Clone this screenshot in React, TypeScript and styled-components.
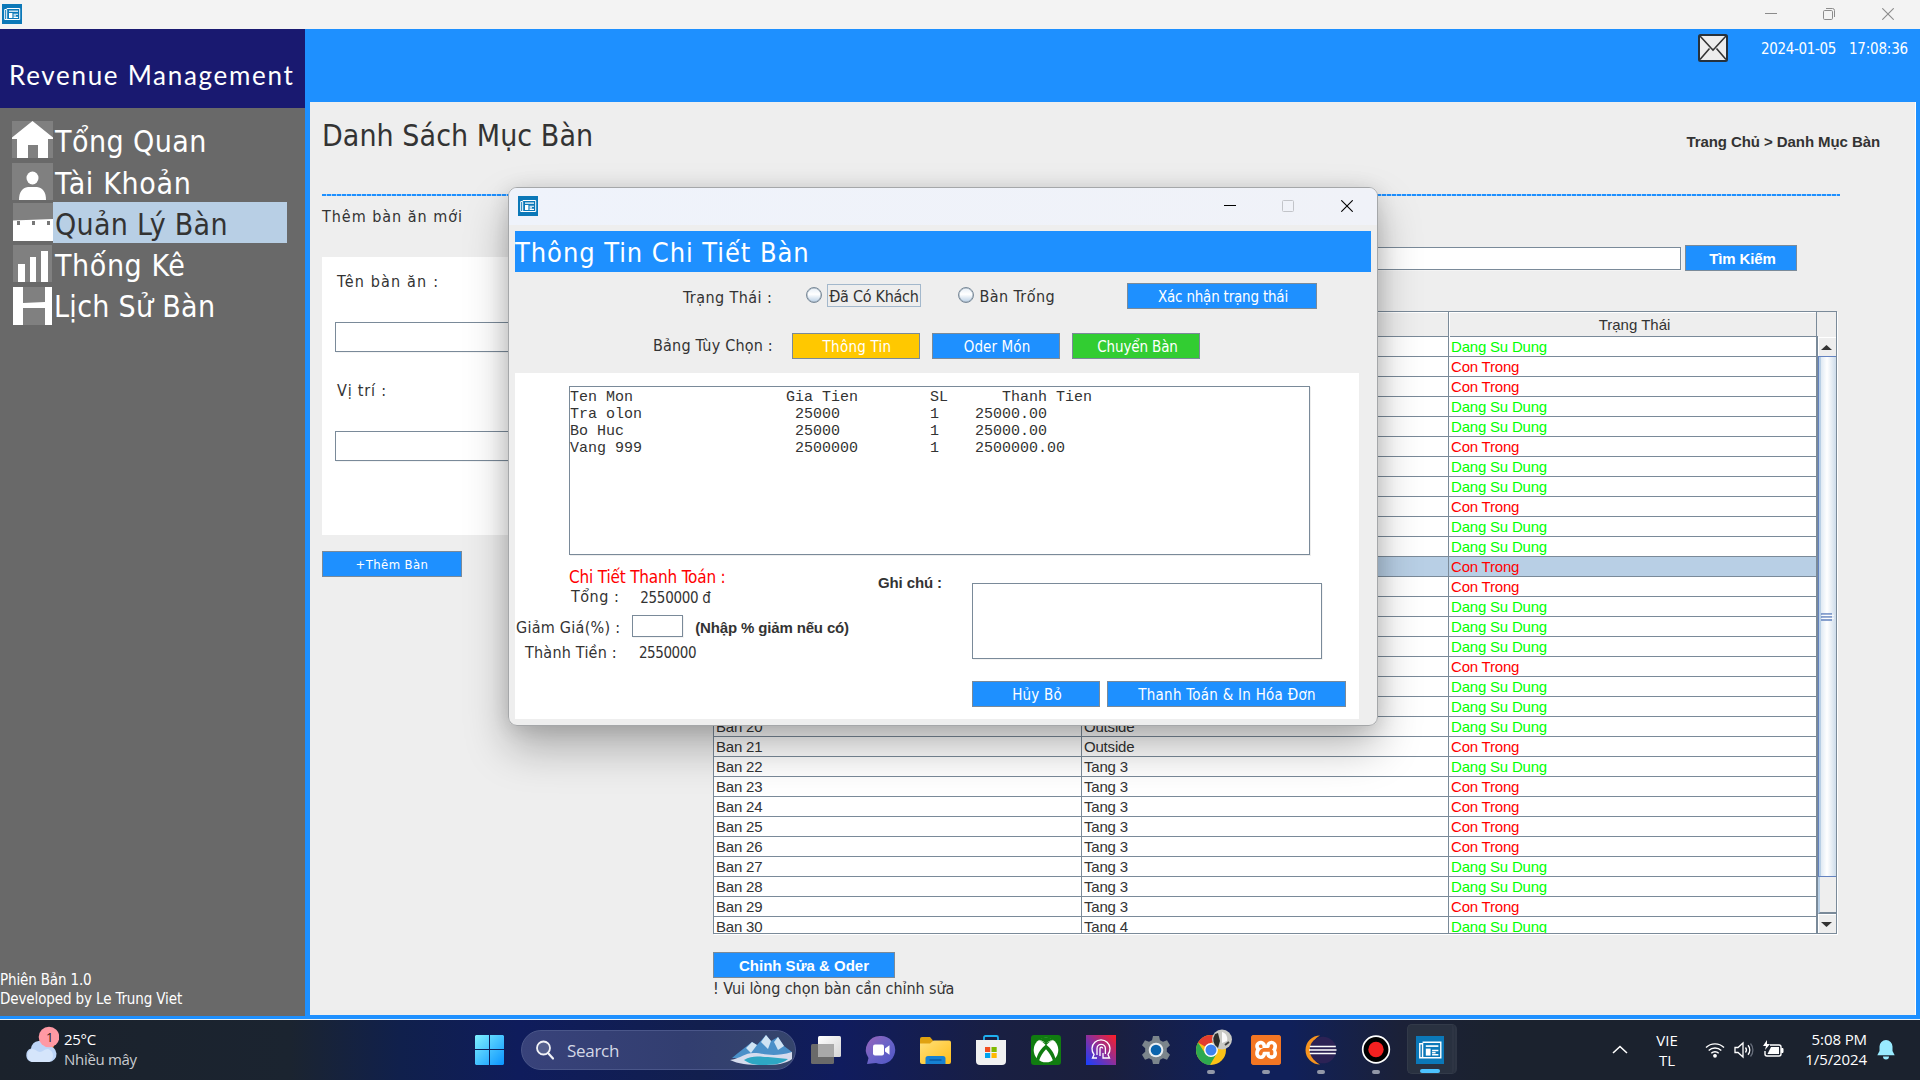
import React from "react";
import styled, { createGlobalStyle } from "styled-components";
import { SiXampp } from "react-icons/si";

const TAHOMA = `Tahoma, "DejaVu Sans Condensed", "DejaVu Sans", sans-serif`;
const ARIAL = `"Liberation Sans", Arial, sans-serif`;
const SEGOE = `"Segoe UI", "Open Sans", "Noto Sans", sans-serif`;
const TREBUCHET = `"Trebuchet MS", Lato, sans-serif`;
const MONO = `"Liberation Mono", "Courier New", monospace`;

const BLUE = "#1e90ff";
const PANEL = "#eeeeee";
const LINE = "#7a8a99";
const INK = "#333333";
const SELECT = "#b8cfe5";
const white = "#ffffff";

const GlobalStyle = createGlobalStyle`
  * { box-sizing: border-box; }
  body { margin: 0; background: #f3f3f3; overflow: hidden; }
`;

const Text = styled.span<{ $size: number; $ls?: number; $lh?: number; $font?: string; $bold?: boolean; $color?: string; $m?: string }>`
  display: block;
  width: max-content;
  flex: none;
  white-space: pre;
  font-family: ${(p) => p.$font ?? TAHOMA};
  font-stretch: ${(p) => (p.$font ? "normal" : "condensed")};
  font-size: ${(p) => p.$size}px;
  font-weight: ${(p) => (p.$bold ? 700 : 400)};
  letter-spacing: ${(p) => p.$ls ?? 0}px;
  line-height: ${(p) => p.$lh ?? 20}px;
  color: ${(p) => p.$color ?? INK};
  margin: ${(p) => p.$m ?? 0};
`;

const Screen = styled.div`
  width: 1920px;
  height: 1080px;
  position: relative;
  display: flex;
  flex-direction: column;
  overflow: hidden;
`;

/* ---------- window chrome ---------- */
const TitleBar = styled.header`
  height: 29px;
  flex: none;
  display: flex;
  align-items: center;
  justify-content: space-between;
  padding: 0 26px 1px 2px;
  background: #f3f3f3;
`;
const Controls = styled.div`
  display: flex;
  align-items: center;
  gap: 46px;
  svg:last-child {
    margin-left: 1px;
  }
`;

const AppIcon = ({ size = 20 }: { size?: number }) => (
  <svg width={size} height={size} viewBox="0 0 20 20">
    <rect width="20" height="20" fill="#0b78b8" />
    <path d="M4.700 4.500h13v11h-15v-10h2v10" fill="none" stroke="#fff" strokeWidth="1" />
    <path d="M7 7.200h9" stroke="#fff" strokeWidth="1.200" />
    <rect x="7" y="9" width="3.400" height="5" fill="#fff" />
    <path d="M11.500 10.300H16M11.500 13.400H16" stroke="#fff" strokeWidth="1.100" />
    <path d="M11.500 11.900h2.500" stroke="#fff" strokeWidth="1.100" />
  </svg>
);
const MinimizeIcon = ({ color }: { color: string }) => (
  <svg width="12" height="12" viewBox="0 0 12 12"><path d="M0 5.500h12" stroke={color} /></svg>
);
const RestoreIcon = () => (
  <svg width="12" height="12" viewBox="0 0 12 12" fill="none" stroke="#8b8b8b">
    <rect x=".5" y="2.500" width="9" height="9" rx="1.200" />
    <path d="M3 .5h6.500a2 2 0 0 1 2 2V9" />
  </svg>
);
const MaximizeIcon = () => (
  <svg width="12" height="12" viewBox="0 0 12 12" fill="none" stroke="#c2c4c9">
    <rect x=".5" y=".5" width="11" height="11" rx="1" />
  </svg>
);
const CloseIcon = ({ color }: { color: string }) => (
  <svg width="12" height="12" viewBox="0 0 12 12"><path d="M.3.3l11.400 11.400M11.700.3L.3 11.700" stroke={color} strokeWidth="1.100" /></svg>
);

/* ---------- main frame ---------- */
const Frame = styled.div`
  height: 990px;
  flex: none;
  display: flex;
  background: ${BLUE};
`;
const Sidebar = styled.nav`
  width: 305px;
  height: 987px;
  display: flex;
  flex-direction: column;
  background: #696969;
`;
const Brand = styled.div`
  height: 79px;
  flex: none;
  padding: 29px 0 0 9px;
  background: #191970;
`;
const Menu = styled.ul`
  list-style: none;
  margin: 0;
  padding: 12px 0 0 12px;
  flex: 1;
`;
const MenuItem = styled.li<{ $indent: number }>`
  display: flex;
  height: 41px;
  padding-left: ${(p) => p.$indent}px;
  align-items: flex-start;
`;
const MenuIcon = styled.svg<{ $dy: number }>`
  display: block;
  flex: none;
  margin-top: ${(p) => p.$dy}px;
  background: #808080;
`;
const MenuLabel = styled.div<{ $active?: boolean; $gap?: number }>`
  height: 41px;
  width: 234px;
  margin-left: ${(p) => p.$gap ?? 0}px;
  padding-left: 2px;
  background: ${(p) => (p.$active ? SELECT : "transparent")};
`;
const Footer = styled.div`
  height: 49px;
  padding-top: 4px;
`;

const Main = styled.div`
  flex: 1;
  margin-left: 5px;
  display: flex;
  flex-direction: column;
`;
const TopStrip = styled.div`
  height: 73px;
  flex: none;
  display: flex;
  justify-content: flex-end;
  align-items: flex-start;
  padding: 6px 12px 0 0;
`;
const MailIcon = styled.svg`
  display: block;
  margin-top: -1px;
`;
const Content = styled.main`
  width: 1606px;
  height: 913px;
  padding-left: 12px;
  border-right: 1px solid #fff;
  background: ${PANEL};
`;
const Heading = styled.div`
  height: 92px;
  display: flex;
  justify-content: space-between;
  padding-right: 35px;
`;
const DashLine = styled.div`
  width: 1518px;
  height: 2px;
  background: repeating-linear-gradient(90deg, ${BLUE} 0 4px, #a5cff8 4px 5px);
`;
const Columns = styled.div`
  display: flex;
`;
const FormColumn = styled.section`
  width: 391px;
  padding-top: 11px;
`;
const FormCard = styled.div`
  width: 340px;
  height: 278px;
  margin: 30px 0 16px;
  padding: 15px 0 0 13px;
  background: #fff;
`;
const Field = styled.div<{ $w: number; $h: number; $m?: string }>`
  width: ${(p) => p.$w}px;
  height: ${(p) => p.$h}px;
  flex: none;
  margin: ${(p) => p.$m ?? 0};
  background: #fff;
  border: 1px solid ${LINE};
  box-shadow: 1px 1px 0 #f4f4f4;
`;
const Button = styled.button<{ $w: number; $bg?: string; $m?: string; $pl?: number }>`
  width: ${(p) => p.$w}px;
  height: 26px;
  flex: none;
  margin: ${(p) => p.$m ?? 0};
  padding: 1px 0 0 ${(p) => p.$pl ?? 0}px;
  display: flex;
  align-items: center;
  justify-content: center;
  border: 1px solid ${LINE};
  background: ${(p) => p.$bg ?? BLUE};
`;
const ListColumn = styled.section`
  width: 1124px;
  padding-top: 49px;
`;
const SearchRow = styled.div`
  display: flex;
  align-items: center;
  justify-content: flex-end;
  gap: 4px;
  padding-right: 40px;
  margin-bottom: 40px;
`;

/* ---------- table ---------- */
const TableBox = styled.div`
  width: 1124px;
  height: 623px;
  display: grid;
  grid-template-columns: 1104px 19px;
  grid-template-rows: 25px 596px;
  border: 1px solid ${LINE};
  border-right: 0;
  box-shadow: 1px 1px 0 #fff;
`;
const HeadRow = styled.div`
  display: grid;
  grid-template-columns: 368px 367px 368px;
  border-bottom: 1px solid ${LINE};
`;
const HeadCell = styled.div`
  display: flex;
  justify-content: center;
  padding-left: 4px;
  border-right: 1px solid ${LINE};
  box-shadow: inset 1px 1px 0 #fff;
`;
const Corner = styled.div`
  border-right: 1px solid ${LINE};
`;
const Rows = styled.div`
  overflow: hidden;
  background: #fff;
  border-right: 2px solid ${LINE};
`;
const Row = styled.div<{ $selected: boolean }>`
  height: 20px;
  display: grid;
  grid-template-columns: 368px 367px 367px;
  background: ${(p) => (p.$selected ? SELECT : "#fff")};
  border-bottom: 1px solid ${LINE};
`;
const Cell = styled.div<{ $color?: string }>`
  padding-left: 2px;
  font: 15px/19px ${ARIAL};
  letter-spacing: -0.2px;
  color: ${(p) => p.$color ?? INK};
  white-space: nowrap;
  border-right: 1px solid ${LINE};
  &:last-child {
    border-right: 0;
  }
`;
const ScrollBar = styled.div`
  display: flex;
  flex-direction: column;
  border-right: 1px solid ${LINE};
  background: ${PANEL};
`;
const ScrollButton = styled.div<{ $h: number }>`
  height: ${(p) => p.$h}px;
  display: flex;
  align-items: center;
  justify-content: center;
  border-top: 1px solid #fff;
  border-left: 1px solid #fff;
  padding-right: 2px;
`;
const Thumb = styled.div`
  height: 521px;
  display: flex;
  align-items: center;
  justify-content: center;
  border: 1px solid #6382bf;
  border-right: 0;
  background: linear-gradient(90deg, #b8cfe5 0 2px, #dfe9f3 2px, #fff 8px, #c8d8e8 18px);
`;
const Track = styled.div`
  height: 37px;
  border-left: 2px solid ${SELECT};
  border-bottom: 2px solid ${LINE};
`;

type Status = "D" | "C";
const STATUSES = "DCCDDCDDCDDCCDDDCDDDCDCCCCDDCD".split("") as Status[];
const placeOf = (n: number) => (n < 22 ? "Outside" : n < 30 ? "Tang 3" : "Tang 4");

function TableList() {
  return (
    <TableBox>
      <HeadRow>
        <HeadCell />
        <HeadCell />
        <HeadCell>
          <Text $size={15} $lh={26} $font={ARIAL}>Trạng Thái</Text>
        </HeadCell>
      </HeadRow>
      <Corner />
      <Rows>
        {STATUSES.map((s, i) => (
          <Row key={i} $selected={i === 11}>
            <Cell>{i >= 19 ? `Ban ${i + 1}` : ""}</Cell>
            <Cell>{i >= 19 ? placeOf(i + 1) : ""}</Cell>
            <Cell $color={s === "D" ? "#00ff00" : "#ff0000"}>{s === "D" ? "Dang Su Dung" : "Con Trong"}</Cell>
          </Row>
        ))}
      </Rows>
      <ScrollBar>
        <ScrollButton $h={19}>
          <svg width="11" height="5" viewBox="0 0 11 5"><path d="M5.500 0L11 5H0z" fill={INK} /></svg>
        </ScrollButton>
        <Thumb>
          <svg width="13" height="8" viewBox="0 0 13 8">
            <path d="M0 1h11M0 4h11M0 7h11" stroke="#6382bf" strokeWidth="1.600" />
            <path d="M1 2.300h12M1 5.300h12" stroke="#fff" strokeWidth=".9" />
          </svg>
        </Thumb>
        <Track />
        <ScrollButton $h={19}>
          <svg width="11" height="5" viewBox="0 0 11 5"><path d="M0 0h11L5.500 5z" fill={INK} /></svg>
        </ScrollButton>
      </ScrollBar>
    </TableBox>
  );
}

/* ---------- dialog ---------- */
const DialogShadow = styled.div`
  position: absolute;
  left: 508px;
  top: 187px;
  width: 870px;
  height: 539px;
  border-radius: 9px;
  box-shadow: 0 22px 44px rgba(0, 0, 0, 0.28), 0 2px 20px rgba(0, 0, 0, 0.12);
`;
const Dialog = styled.div`
  position: absolute;
  left: 508px;
  top: 187px;
  width: 870px;
  height: 539px;
  border: 1px solid #a5a7a9;
  border-radius: 9px;
  overflow: hidden;
  background: ${PANEL};
`;
const DialogTitle = styled.div`
  height: 37px;
  display: flex;
  align-items: center;
  justify-content: space-between;
  padding: 0 24px 1px 9px;
  background: linear-gradient(90deg, #eff3fb, #f0f2f8);
`;
const DialogBody = styled.div`
  padding: 6px 5px 0 6px;
`;
const Banner = styled.h2`
  margin: 0;
  height: 41px;
  width: 856px;
  background: ${BLUE};
`;
const OptionRow = styled.div<{ $h: number; $pl: number; $pr: number }>`
  display: flex;
  align-items: flex-start;
  height: ${(p) => p.$h}px;
  padding: 11px ${(p) => p.$pr}px 0 ${(p) => p.$pl}px;
`;
const Radio = styled.span<{ $m: string }>`
  width: 16px;
  height: 16px;
  flex: none;
  margin: ${(p) => p.$m};
  border: 1px solid ${LINE};
  border-radius: 50%;
  background: linear-gradient(#e6eef6, #fff 45%, #c6d8ea 90%);
  box-shadow: inset 0 0 0 0.5px #9aa8b5;
`;
const RadioLabel = styled.span<{ $focus?: boolean; $m: string }>`
  height: 23px;
  margin: ${(p) => p.$m};
  padding: 0 1px;
  border: 1px solid ${(p) => (p.$focus ? "#a3b8cc" : "transparent")};
`;
const Sheet = styled.div`
  width: 844px;
  height: 346px;
  padding-top: 13px;
  background: #fff;
`;
const Receipt = styled.pre`
  width: 741px;
  height: 169px;
  margin: 0 0 0 54px;
  padding: 1.6px 0 0 0;
  border: 1px solid ${LINE};
  box-shadow: 1px 1px 0 #eee;
  font: 15px/17.2px ${MONO};
  color: ${INK};
`;
const PayArea = styled.div`
  display: grid;
  grid-template-columns: 457px 387px;
`;
const PayDetail = styled.div`
  padding-top: 12px;
`;
const PayLine = styled.div<{ $h: number; $pl: number }>`
  display: flex;
  align-items: flex-start;
  height: ${(p) => p.$h}px;
  padding-left: ${(p) => p.$pl}px;
`;
const NoteRow = styled.div`
  width: 444px;
  display: flex;
  justify-content: space-between;
  margin: 28px 0 22px -94px;
`;
const Actions = styled.div`
  display: flex;
  gap: 7px;
`;

const pad = (cells: [number, string][]) => cells.reduce((line, [at, s]) => line.padEnd(at) + s, "");
const RECEIPT = [
  pad([[0, "Ten Mon"], [24, "Gia Tien"], [40, "SL"], [48, "Thanh Tien"]]),
  pad([[0, "Tra olon"], [25, "25000"], [40, "1"], [45, "25000.00"]]),
  pad([[0, "Bo Huc"], [25, "25000"], [40, "1"], [45, "25000.00"]]),
  pad([[0, "Vang 999"], [25, "2500000"], [40, "1"], [45, "2500000.00"]]),
].join("\n");

function DetailDialog() {
  return (
    <Dialog>
      <DialogTitle>
        <AppIcon />
        <Controls>
          <MinimizeIcon color="#000" />
          <MaximizeIcon />
          <CloseIcon color="#000" />
        </Controls>
      </DialogTitle>
      <DialogBody>
        <Banner><Text $size={27} $lh={43} $ls={0.93} $color={white}>Thông Tin Chi Tiết Bàn</Text></Banner>
        <OptionRow $h={50} $pl={168} $pr={55}>
          <Text $size={16} $ls={0.42} $m="5px 0 0">Trạng Thái :</Text>
          <Radio $m="4px 0 0 34px" />
          <RadioLabel $focus $m="1px 0 0 5px"><Text $size={16} $lh={23} $ls={-0.28}>Đã Có Khách</Text></RadioLabel>
          <Radio $m="4px 0 0 37px" />
          <RadioLabel $m="1px 0 0 4px"><Text $size={16} $lh={23} $ls={0.4}>Bàn Trống</Text></RadioLabel>
          <Button $w={190} $m="0 0 0 auto" $pl={2}><Text $size={15} $ls={-0.2} $color={white}>Xác nhận trạng thái</Text></Button>
        </OptionRow>
        <OptionRow $h={51} $pl={138} $pr={172}>
          <Text $size={16} $ls={0.2} $m="3px auto 0 0">Bảng Tùy Chọn :</Text>
          <Button $w={128} $bg="#ffc800" $pl={2}><Text $size={15} $ls={0.25} $color={white}>Thông Tin</Text></Button>
          <Button $w={128} $m="0 12px" $pl={2}><Text $size={15} $ls={0.1} $color={white}>Oder Món</Text></Button>
          <Button $w={128} $bg="#32cd32" $pl={3}><Text $size={15} $ls={-0.11} $color={white}>Chuyển Bàn</Text></Button>
        </OptionRow>
        <Sheet>
          <Receipt>{RECEIPT}</Receipt>
          <PayArea>
            <PayDetail>
              <PayLine $h={19} $pl={54}><Text $size={17} $ls={-0.18} $color="#ff0000">Chi Tiết Thanh Toán :</Text></PayLine>
              <PayLine $h={29} $pl={56}>
                <Text $size={16} $ls={0.5} $m="1px 0 0">Tổng :</Text>
                <Text $size={15} $ls={-0.3} $m="2px 0 0 21px">2550000 đ</Text>
              </PayLine>
              <PayLine $h={26} $pl={1}>
                <Text $size={16} $ls={0.26} $m="3px 0 0">Giảm Giá(%) :</Text>
                <Field $w={51} $h={22} $m="0 0 0 12px" />
                <Text $size={15} $bold $font={ARIAL} $ls={-0.15} $m="3px 0 0 12px">(Nhập % giảm nếu có)</Text>
              </PayLine>
              <PayLine $h={26} $pl={10}>
                <Text $size={16} $ls={0.22} $m="2px 0 0">Thành Tiền :</Text>
                <Text $size={15} $ls={-0.42} $m="2px 0 0 22px">2550000</Text>
              </PayLine>
            </PayDetail>
            <div>
              <NoteRow>
                <Text $size={15} $bold $font={ARIAL} $ls={-0.12} $m="-10px 0 0 0">Ghi chú :</Text>
                <Field $w={350} $h={76} />
              </NoteRow>
              <Actions>
                <Button $w={128} $pl={2}><Text $size={15} $ls={0.2} $color={white}>Hủy Bỏ</Text></Button>
                <Button $w={239} $pl={1}><Text $size={15} $ls={0.27} $color={white}>Thanh Toán & In Hóa Đơn</Text></Button>
              </Actions>
            </div>
          </PayArea>
        </Sheet>
      </DialogBody>
    </Dialog>
  );
}

/* ---------- taskbar ---------- */
const TaskBar = styled.footer`
  height: 61px;
  flex: none;
  display: grid;
  grid-template-columns: 475px 1fr auto;
  border-top: 1px solid #e8f1f5;
  background: linear-gradient(90deg, #1b222c 0, #1b2430 290px, #10204c 400px, #0f1c5c 520px, #121f4e 700px, #101c5e 840px, #191f42 1000px, #1b1f3c 1100px, #10205a 1230px, #10205a 1290px, #1b2138 1400px, #1b222e 1500px);
`;
const Weather = styled.div`
  display: flex;
  padding: 5px 0 0 25px;
`;
const Lines = styled.div<{ $align?: string; $m?: string; $w?: number }>`
  display: flex;
  flex-direction: column;
  align-items: ${(p) => p.$align ?? "flex-start"};
  margin: ${(p) => p.$m ?? 0};
  width: ${(p) => (p.$w ? `${p.$w}px` : "auto")};
`;
const Apps = styled.div`
  display: flex;
  align-items: flex-start;
`;
const StartIcon = styled.svg`
  display: block;
  flex: none;
  margin-top: 15px;
`;
const SearchPill = styled.div`
  width: 275px;
  height: 40px;
  flex: none;
  margin: 10px 2px 0 17px;
  padding: 0 3px 0 14px;
  display: flex;
  align-items: center;
  border: 1px solid #4a5689;
  border-radius: 20px;
  background: linear-gradient(90deg, #38427a, #323e70 60%, #35456c);
`;
const Scenery = styled.svg`
  display: block;
  margin-left: auto;
`;
const AppSlot = styled.div<{ $shift?: number }>`
  width: 55px;
  height: 60px;
  flex: none;
  display: flex;
  flex-direction: column;
  align-items: center;
  margin-left: ${(p) => p.$shift ?? 0}px;
`;
const AppGlyph = styled.svg`
  display: block;
  margin-top: 15px;
  overflow: visible;
`;
const Running = styled.i<{ $active?: boolean }>`
  width: ${(p) => (p.$active ? 20 : 8)}px;
  height: 4px;
  flex: none;
  margin-top: 5px;
  border-radius: 2px;
  background: ${(p) => (p.$active ? "#4cc2ff" : "#9298a8")};
`;
const ActiveTile = styled.div`
  width: 50px;
  height: 50px;
  margin-top: 4px;
  padding-top: 11px;
  display: flex;
  flex-direction: column;
  align-items: center;
  border-radius: 5px;
  border: 1px solid #323a49;
  border-right: 5px double #2e3544;
  background: #293140;
`;
const XamppTile = styled.div`
  width: 30px;
  height: 30px;
  margin-top: 15px;
  border-radius: 3px;
  color: #f37623;
  background: radial-gradient(#fff 58%, #f37623 60%);
  svg {
    display: block;
  }
`;
const Tray = styled.div`
  display: flex;
  align-items: flex-start;
  padding-right: 25px;
`;
const TrayIcon = styled.svg<{ $m: string }>`
  display: block;
  flex: none;
  margin: ${(p) => p.$m};
`;

function TaskApps() {
  return (
    <>
      <AppSlot>
        <AppGlyph width="30" height="30" viewBox="0 0 30 30">
          <defs><linearGradient id="tv" x1="0" y1="0" x2="1" y2="1"><stop offset="0" stopColor="#fff" /><stop offset="1" stopColor="#d5d5d5" /></linearGradient></defs>
          <rect x="0" y="9" width="23" height="20" rx="1.500" fill="#6a6a6a" />
          <rect x="7" y="1" width="23" height="21" rx="1.500" fill="url(#tv)" />
          <path d="M7 9h16v13H8.500a1.500 1.500 0 0 1-1.500-1.500z" fill="#a9a9a9" />
        </AppGlyph>
      </AppSlot>
      <AppSlot>
        <AppGlyph width="30" height="30" viewBox="0 0 30 30">
          <defs><linearGradient id="ch" x1="0" y1="0" x2="1" y2="1"><stop offset="0" stopColor="#9a63b8" /><stop offset=".5" stopColor="#6a63c8" /><stop offset="1" stopColor="#4f55c4" /></linearGradient></defs>
          <path d="M15 1a14 14 0 1 1-5 27L1 29l1.500-6A14 14 0 0 1 15 1z" fill="url(#ch)" />
          <rect x="7" y="9.500" width="11" height="11" rx="2" fill="#fff" />
          <path d="M19 13.500l4.500-3.300v9.600L19 16.500z" fill="#fff" />
        </AppGlyph>
      </AppSlot>
      <AppSlot>
        <AppGlyph width="31" height="30" viewBox="0 0 31 30">
          <defs><linearGradient id="fo" x1="0" y1="0" x2="1" y2="1"><stop offset="0" stopColor="#ffe07a" /><stop offset="1" stopColor="#ffbe1a" /></linearGradient></defs>
          <path d="M0 4a2 2 0 0 1 2-2h8l3 3.500V9H0z" fill="#e0a210" />
          <path d="M0 8.500h10l3.500-3H29a2 2 0 0 1 2 2V27a2 2 0 0 1-2 2H2a2 2 0 0 1-2-2z" fill="url(#fo)" />
          <path d="M5.500 29v-5.500a2.500 2.500 0 0 1 2.500-2.500h15a2.500 2.500 0 0 1 2.500 2.500V29z" fill="#1681d2" />
          <path d="M9.500 25h12" stroke="#0a5ca8" strokeWidth="1.600" />
        </AppGlyph>
      </AppSlot>
      <AppSlot>
        <AppGlyph width="30" height="30" viewBox="0 0 30 30">
          <path d="M8 6V2.500A1.500 1.500 0 0 1 9.500 1h11A1.500 1.500 0 0 1 22 2.500V6" fill="none" stroke="#1fb0f0" strokeWidth="1.800" />
          <path d="M0 5h30v21a4 4 0 0 1-4 4H4a4 4 0 0 1-4-4z" fill="#f1f1f1" />
          <rect x="9" y="12" width="5.200" height="5" fill="#f25022" /><rect x="15.500" y="12" width="5.200" height="5" fill="#7fba00" />
          <rect x="9" y="18" width="5.200" height="5" fill="#00a4ef" /><rect x="15.500" y="18" width="5.200" height="5" fill="#ffb900" />
        </AppGlyph>
      </AppSlot>
      <AppSlot>
        <AppGlyph width="30" height="30" viewBox="0 0 30 30">
          <rect width="30" height="30" rx="3" fill="#107c10" />
          <circle cx="15" cy="15" r="12.300" fill="#fff" />
          <path d="M7 5.500c3-.8 5.500.8 8 3 2.500-2.200 5-3.800 8-3-2-2-4.500-2.900-8-2.900s-6 .9-8 2.900z" fill="#107c10" />
          <path d="M15 9.500c-4.800 3.800-8.500 9-9.300 14 .8 1 1.500 1.700 2.300 2.300 1.500-4.600 4-8.600 7-11.600 3 3 5.500 7 7 11.600.8-.6 1.500-1.300 2.300-2.300-.8-5-4.500-10.200-9.300-14z" fill="#107c10" />
          <path d="M8.500 5.600c2 .6 4.500 2.600 6.500 4.700 2-2.100 4.500-4.100 6.500-4.700L15 8z" fill="#107c10" />
        </AppGlyph>
      </AppSlot>
      <AppSlot>
        <AppGlyph width="30" height="30" viewBox="0 0 30 30">
          <defs><linearGradient id="ms" x1="0" y1="1" x2="1" y2="0"><stop offset="0" stopColor="#1440ff" /><stop offset=".5" stopColor="#8c2f9c" /><stop offset="1" stopColor="#ff1e24" /></linearGradient></defs>
          <rect width="30" height="30" fill="url(#ms)" />
          <path d="M11 23H6.500l1.500-3.500a9 9 0 1 1 14 0L23.500 23H17v-5" fill="none" stroke="#fff" strokeWidth="1.300" />
          <path d="M11 20v-6.500a4.200 4.200 0 0 1 8.400 0V19" fill="none" stroke="#fff" strokeWidth="1.300" />
          <path d="M14 21v-7.500a1.300 1.300 0 0 1 2.600 0" fill="none" stroke="#fff" strokeWidth="1.300" />
        </AppGlyph>
      </AppSlot>
      <AppSlot>
        <AppGlyph width="30" height="30" viewBox="0 0 30 30">
          <path d="M12 1h6l1 4.200 3 1.600 4-1.500 3 5-3.200 3v3.400l3.200 3-3 5-4-1.500-3 1.600-1 4.200h-6l-1-4.200-3-1.600-4 1.500-3-5 3.200-3v-3.400l-3.200-3 3-5 4 1.500 3-1.600z" fill="#7b858c" />
          <circle cx="15" cy="15" r="7.300" fill="#e9eef2" /><circle cx="15" cy="15" r="5.300" fill="#0a64ad" />
        </AppGlyph>
      </AppSlot>
      <AppSlot>
        <AppGlyph width="30" height="30" viewBox="0 0 30 30">
          <circle cx="15" cy="15" r="15" fill="#fbc116" />
          <path d="M15 15L2 7.500A15 15 0 0 1 28 7.500H15z" fill="#e33b2e" />
          <path d="M2 7.500A15 15 0 0 0 14 30l7-12H9z" fill="#2da94f" />
          <circle cx="15" cy="15" r="6.900" fill="#fff" /><circle cx="15" cy="15" r="5.500" fill="#3f82ee" />
          <circle cx="26" cy="4.500" r="10" fill="#c9cac5" /><path d="M19 -1a10 10 0 0 0 3 14l2-7-2-8z" fill="#2b2d2c" />
          <path d="M26 -3c4 1 6 5 5 9l-5 2z" fill="#fafafa" /><path d="M29 10l4-3" stroke="#444" strokeWidth="2" />
        </AppGlyph>
        <Running />
      </AppSlot>
      <AppSlot>
        <XamppTile><SiXampp size={30} /></XamppTile>
        <Running />
      </AppSlot>
      <AppSlot>
        <AppGlyph width="30" height="30" viewBox="0 0 30 30">
          <path d="M14 .5a14.500 14.500 0 0 0 0 29C3 24 3 6 14 .5z" fill="#f7941e" />
          <circle cx="17" cy="15" r="13.300" fill="#2c2255" />
          <path d="M3.800 11.500h26M3 15h27.500M3.800 18.500h26" stroke="#fff" strokeWidth="1.500" />
        </AppGlyph>
        <Running />
      </AppSlot>
      <AppSlot>
        <AppGlyph width="30" height="30" viewBox="0 0 30 30">
          <circle cx="15" cy="14.500" r="13.300" fill="#000" stroke="#fff" strokeWidth="1.700" /><circle cx="15" cy="14.500" r="7.700" fill="#f32020" />
        </AppGlyph>
        <Running />
      </AppSlot>
      <AppSlot $shift={1}>
        <ActiveTile>
          <AppIcon size={28} />
          <Running $active />
        </ActiveTile>
      </AppSlot>
    </>
  );
}

export default function App() {
  return (
    <Screen>
      <GlobalStyle />
      <TitleBar>
        <AppIcon />
        <Controls>
          <MinimizeIcon color="#8b8b8b" />
          <RestoreIcon />
          <CloseIcon color="#8b8b8b" />
        </Controls>
      </TitleBar>
      <Frame>
        <Sidebar>
          <Brand><Text $size={26} $lh={34} $ls={1.7} $font={TREBUCHET} $color={white}>Revenue Management</Text></Brand>
          <Menu>
            <MenuItem $indent={-1}>
              <MenuIcon $dy={1} width="41" height="37" viewBox="0 0 41 37">
                <path d="M20.500 0L0 16.500V18h5v19h11V24h10v13h10V18h5v-1.500z" fill="#fff" />
              </MenuIcon>
              <MenuLabel><Text $size={30} $lh={44} $ls={0.45} $color={white}>Tổng Quan</Text></MenuLabel>
            </MenuItem>
            <MenuItem $indent={0}>
              <MenuIcon $dy={2} width="41" height="37" viewBox="0 0 41 37">
                <ellipse cx="20.500" cy="15" rx="6" ry="6.500" fill="#fff" /><path d="M7 37c0-8 3-12 9-13h9c6 1 9 5 9 13z" fill="#fff" />
              </MenuIcon>
              <MenuLabel><Text $size={30} $lh={46} $ls={0.65} $color={white}>Tài Khoản</Text></MenuLabel>
            </MenuItem>
            <MenuItem $indent={1}>
              <MenuIcon $dy={1} width="40" height="38" viewBox="0 0 40 38">
                <path d="M0 17.500L40 16v22H0z" fill="#fff" /><path d="M4 20h3M19 20h3M34 20h3" stroke="#777" strokeWidth="4" />
              </MenuIcon>
              <MenuLabel $active><Text $size={30} $lh={46} $ls={0.3}>Quản Lý Bàn</Text></MenuLabel>
            </MenuItem>
            <MenuItem $indent={1}>
              <MenuIcon $dy={2} width="39" height="37" viewBox="0 0 39 37">
                <path d="M5 37V19h7v18zM17 37V12h6v25zM28 37V6h7v31z" fill="#fff" />
              </MenuIcon>
              <MenuLabel $gap={1}><Text $size={30} $lh={46} $ls={0.6} $color={white}>Thống Kê</Text></MenuLabel>
            </MenuItem>
            <MenuItem $indent={1}>
              <MenuIcon $dy={3} width="39" height="38" viewBox="0 0 39 38">
                <path d="M0 0h10v16l22-1V0h7v38h-7V21H10v17H0z" fill="#fff" />
              </MenuIcon>
              <MenuLabel $gap={0}><Text $size={30} $lh={46} $ls={0.3} $color={white}>Lịch Sử Bàn</Text></MenuLabel>
            </MenuItem>
          </Menu>
          <Footer>
            <Text $size={15} $lh={19} $ls={-0.15} $color={white}>Phiên Bản 1.0</Text>
            <Text $size={15} $lh={19} $ls={-0.12} $color={white}>Developed by Le Trung Viet</Text>
          </Footer>
        </Sidebar>
        <Main>
          <TopStrip>
            <MailIcon width="30" height="28" viewBox="0 0 30 28">
              <rect x="1" y="1" width="28" height="26" rx="1.500" fill="#ededed" stroke="#26313c" strokeWidth="2" />
              <path d="M2 2l11 12 2 2 2-2L28 2M2 25.500l9.500-11M28 25.500l-9.500-11" fill="none" stroke="#333" strokeWidth="1.600" />
            </MailIcon>
            <Text $size={15} $ls={-0.35} $m="4px 13px 0 33px" $color={white}>2024-01-05</Text>
            <Text $size={15} $ls={-0.2} $m="4px 0 0" $color={white}>17:08:36</Text>
          </TopStrip>
          <Content>
            <Heading>
              <Text $size={30} $lh={40} $ls={0.05} $m="14px 0 0">Danh Sách Mục Bàn</Text>
              <Text $size={15} $bold $font={ARIAL} $ls={-0.08} $m="30px 0 0">{"Trang Chủ > Danh Mục Bàn"}</Text>
            </Heading>
            <DashLine />
            <Columns>
              <FormColumn>
                <Text $size={16} $ls={0.97}>Thêm bàn ăn mới</Text>
                <FormCard>
                  <Text $size={16} $ls={1.17} $m="0 0 0 2px">Tên bàn ăn :</Text>
                  <Field $w={300} $h={30} $m="30px 0 29px" />
                  <Text $size={16} $ls={0.8} $m="0 0 0 2px">Vị trí :</Text>
                  <Field $w={300} $h={30} $m="30px 0 0" />
                </FormCard>
                <Button $w={140}><Text $size={13} $ls={0.4} $color={white}>+Thêm Bàn</Text></Button>
              </FormColumn>
              <ListColumn>
                <SearchRow>
                  <Field $w={400} $h={23} />
                  <Button $w={112} $pl={3}><Text $size={15} $bold $font={ARIAL} $ls={-0.15} $color={white}>Tìm Kiếm</Text></Button>
                </SearchRow>
                <TableList />
                <Button $w={182} $m="18px 0 0"><Text $size={15} $bold $font={ARIAL} $color={white}>Chỉnh Sửa & Oder</Text></Button>
                <Text $size={16} $ls={-0.06} $m="1px 0 0">! Vui lòng chọn bàn cần chỉnh sửa</Text>
              </ListColumn>
            </Columns>
          </Content>
        </Main>
      </Frame>
      <TaskBar>
        <Weather>
          <svg width="34" height="40" viewBox="0 0 34 40">
            <circle cx="23" cy="20" r="6" fill="#f58220" />
            <path d="M7 37a7 7 0 0 1-1-13.500A9 9 0 0 1 23 21a8 8 0 0 1 1 16z" fill="#bdd5f7" />
            <path d="M7 37a7 7 0 0 1 0-13c4 0 5 3 8 3s4-3 8-3a7 7 0 0 1 1 13z" fill="#d5e5fb" />
            <circle cx="24" cy="12" r="10.300" fill="#ff99a4" />
            <text x="21" y="17" fontSize="13" fontFamily="Open Sans" fill="#222">1</text>
          </svg>
          <Lines $m="4px 0 0 5px">
            <Text $size={15} $ls={-0.3} $font={SEGOE} $color={white}>25°C</Text>
            <Text $size={15} $ls={-0.3} $font={SEGOE} $color="#c9cbd0">Nhiều mây</Text>
          </Lines>
        </Weather>
        <Apps>
          <StartIcon width="29" height="30" viewBox="0 0 29 30">
            <defs><linearGradient id="st" x1="0" y1="0" x2="1" y2="1"><stop offset="0" stopColor="#7ff0ff" /><stop offset="1" stopColor="#0a94ff" /></linearGradient></defs>
            <path d="M1 0h13v14H0V1zM15 0h13l1 1v13H15zM0 15h14v15H1l-1-1zM15 15h14v14l-1 1H15z" fill="url(#st)" />
          </StartIcon>
          <SearchPill>
            <svg width="18" height="20" viewBox="0 0 18 20"><circle cx="7.500" cy="8" r="6.500" fill="#55608e" stroke="#f2f3f7" strokeWidth="1.800" /><path d="M12 13l5 5.500" stroke="#f2f3f7" strokeWidth="2.200" strokeLinecap="round" /></svg>
            <Text $size={17} $ls={-0.3} $font={SEGOE} $color="#d4d8e6" $m="1px 0 0 13px">Search</Text>
            <Scenery width="62" height="30" viewBox="0 0 62 30">
              <path d="M8 18L22 7l5 3L36 0l5 6 7-4 6 9 8 6v6H2z" fill="#4a90c9" />
              <path d="M22 7l5 3-6 8-5-5zM36 0l5 6-3 8-7-7zM48 2l6 9-6 4-4-8z" fill="#cfe3f3" />
              <path d="M0 25c12-2 14-7 24-7s18 5 38-1v7c-6 5-16 6-30 6S8 29 0 25z" fill="#d5dcee" />
              <path d="M14 25c8-5 16-3 24-3l20 2c-6 5-14 6-26 6-8 0-14-2-18-5z" fill="#2ea7c4" />
            </Scenery>
          </SearchPill>
          <TaskApps />
        </Apps>
        <Tray>
          <TrayIcon $m="25px 28px 0 0" width="16" height="9" viewBox="0 0 16 9"><path d="M1 8l7-6.500L15 8" fill="none" stroke="#fff" strokeWidth="1.600" /></TrayIcon>
          <Lines $align="center" $w={24} $m="10px 26px 0 -1px">
            <Text $size={15} $font={SEGOE} $color={white}>VIE</Text>
            <Text $size={15} $font={SEGOE} $color={white}>TL</Text>
          </Lines>
          <TrayIcon $m="22px 9px 0 0" width="20" height="16" viewBox="0 0 20 16" fill="none" stroke="#fff" strokeWidth="1.400">
            <path d="M1 5.500a13 13 0 0 1 18 0M3.700 8.500a9 9 0 0 1 12.600 0M6.300 11.300a5.300 5.300 0 0 1 7.400 0" /><circle cx="10" cy="13.800" r="1.200" fill="#fff" />
          </TrayIcon>
          <TrayIcon $m="21px 9px 0 0" width="20" height="18" viewBox="0 0 20 18" fill="none" stroke="#fff" strokeWidth="1.300">
            <path d="M1 6.500h3l5-4.500v14l-5-4.500H1z" /><path d="M11.500 6.500a4 4 0 0 1 0 5M14 4.300a7 7 0 0 1 0 9.400" /><path d="M16.500 2.500a10 10 0 0 1 0 13" stroke="#666d7a" />
          </TrayIcon>
          <TrayIcon $m="20px 21px 0 0" width="21" height="18" viewBox="0 0 21 18">
            <path d="M7 5h9a2 2 0 0 1 2 2v7a2 2 0 0 1-2 2H4a2 2 0 0 1-2-2v-3" fill="none" stroke="#fff" strokeWidth="1.400" />
            <path d="M8 7h8v7H4.500z" fill="#fff" /><path d="M18.500 8.500H20v4h-1.500z" stroke="#fff" fill="#fff" /><path d="M4 0L0 6h3l-1 4 5-6H4z" fill="#fff" />
          </TrayIcon>
          <Lines $align="flex-end" $w={62} $m="9px 10px 0 0">
            <Text $size={15} $ls={-0.1} $font={SEGOE} $color={white}>5:08 PM</Text>
            <Text $size={15} $ls={-0.1} $font={SEGOE} $color={white}>1/5/2024</Text>
          </Lines>
          <TrayIcon $m="20px 0 0" width="18" height="20" viewBox="0 0 18 20">
            <path d="M9 0a6.500 6.500 0 0 1 6.500 6.500V11l2.200 4.200H.3L2.500 11V6.500A6.500 6.500 0 0 1 9 0zM6 16.500h6a3 3 0 0 1-6 0z" fill="#99ebff" />
          </TrayIcon>
        </Tray>
      </TaskBar>
      <DialogShadow />
      <DetailDialog />
    </Screen>
  );
}
